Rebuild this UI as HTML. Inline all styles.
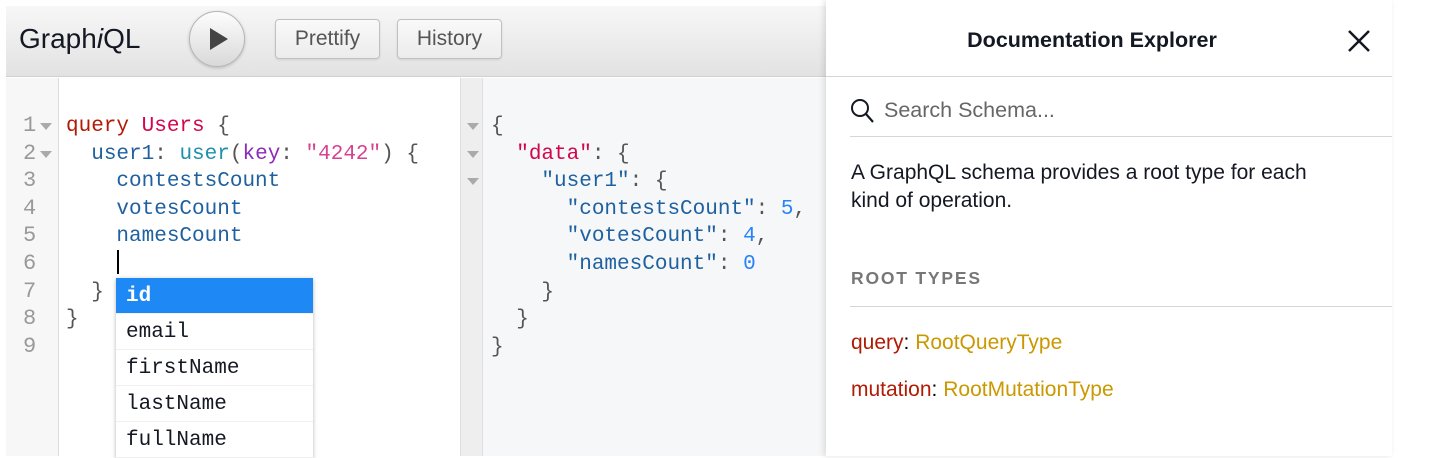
<!DOCTYPE html>
<html><head><meta charset="utf-8"><style>
*{margin:0;padding:0;box-sizing:border-box}
body{width:1440px;height:456px;background:#fff;position:relative;overflow:hidden;font-family:"Liberation Sans",sans-serif}
.abs{position:absolute}
.mono{font-family:"Liberation Mono",monospace;font-size:21px;line-height:27.6px;white-space:pre}
.toolbar{left:6px;top:6px;width:820px;height:71px;background:linear-gradient(#f7f7f7,#e2e2e2);border-bottom:1px solid #d0d0d0}
.btn{position:absolute;top:13px;height:40px;border:1px solid #c0c0c0;border-radius:4px;background:linear-gradient(#f9f9f9,#ececec);font-size:21px;color:#555;text-align:center;line-height:38px;box-shadow:0 1px 2px rgba(0,0,0,.1)}
.kw{color:#b11a04}.def{color:#d2054e}.prop{color:#1f61a0}.q{color:#1c92a9}.at{color:#8b2bb9}.str{color:#d64292}.num{color:#2882f9}.p{color:#555}
.ln{color:#999}
.ar{position:absolute;width:0;height:0;border-left:6px solid transparent;border-right:6px solid transparent;border-top:7px solid #aaa}
.dd{font-family:"Liberation Mono",monospace;font-size:21px}
.dd div{height:36px;line-height:37px;padding-left:10px;border-bottom:1px solid #f0f0f0;color:#141823}
</style></head><body>
<div class="abs toolbar">
 <div class="abs" style="left:13px;top:17px;font-size:28px;color:#141823">Graph<i>i</i>QL</div>
 <div class="abs" style="left:183px;top:5px;width:56px;height:56px;border-radius:50%;border:1px solid #b5b5b5;background:linear-gradient(#fdfdfd,#d9d9d9);box-shadow:0 1px 3px rgba(0,0,0,.2)">
  <svg width="56" height="56" style="position:absolute;left:-1px;top:-1px"><path d="M21 17 L21 39 L39 28 Z" fill="#444"/></svg>
 </div>
 <div class="btn" style="left:269px;width:105px">Prettify</div>
 <div class="btn" style="left:391px;width:105px">History</div>
</div>
<!-- editor -->
<div class="abs" style="left:6px;top:78px;width:53px;height:378px;background:#f7f7f7;border-right:1px solid #ddd"></div>
<div class="abs mono ln" style="left:23px;top:112px;font-size:22px">1
2
3
4
5
6
7
8
9</div>
<div class="ar" style="left:40px;top:123px"></div>
<div class="ar" style="left:40px;top:151px"></div>
<div class="abs mono" style="left:66px;top:113px"><span class="kw">query</span> <span class="def">Users</span> <span class="p">{</span>
  <span class="prop">user1</span><span class="p">:</span> <span class="q">user</span><span class="p">(</span><span class="at">key</span><span class="p">:</span> <span class="str">"4242"</span><span class="p">) {</span>
    <span class="prop">contestsCount</span>
    <span class="prop">votesCount</span>
    <span class="prop">namesCount</span>

  <span class="p">}</span>
<span class="p">}</span></div>
<div class="abs" style="left:117px;top:250px;width:1.5px;height:24px;background:#000"></div>
<div class="abs dd" style="left:116px;top:278px;width:197px;height:180px;background:#fff;box-shadow:0 1px 4px rgba(0,0,0,.3);overflow:hidden"><div style="background:#1e88f5;color:#fff;font-weight:bold">id</div><div>email</div><div>firstName</div><div>lastName</div><div>fullName</div></div>
<!-- results -->
<div class="abs" style="left:460px;top:78px;width:366px;height:378px;background:#f6f7f8"></div>
<div class="abs" style="left:460px;top:78px;width:23px;height:378px;background:#eeeeee;border-left:1px solid #ddd;border-right:1px solid #e0e0e0"></div>
<div class="ar" style="left:467px;top:123px"></div>
<div class="ar" style="left:467px;top:151px"></div>
<div class="ar" style="left:467px;top:178px"></div>
<div class="abs mono" style="left:491px;top:113px"><span class="p">{</span>
  <span class="def">"data"</span><span class="p">: {</span>
    <span class="prop">"user1"</span><span class="p">: {</span>
      <span class="prop">"contestsCount"</span><span class="p">:</span> <span class="num">5</span><span class="p">,</span>
      <span class="prop">"votesCount"</span><span class="p">:</span> <span class="num">4</span><span class="p">,</span>
      <span class="prop">"namesCount"</span><span class="p">:</span> <span class="num">0</span>
    <span class="p">}</span>
  <span class="p">}</span>
<span class="p">}</span></div>
<!-- doc -->
<div class="abs" style="left:826px;top:0;width:566px;height:456px;background:#fff;box-shadow:-2px 0 6px rgba(0,0,0,.12)"></div>
<div class="abs" style="left:826px;top:28px;width:532px;text-align:center;font-size:21.5px;font-weight:bold;color:#141823">Documentation Explorer</div>
<svg class="abs" style="left:1347px;top:29px" width="24" height="24"><path d="M2 2 L22 22 M22 2 L2 22" stroke="#141823" stroke-width="2.5"/></svg>
<div class="abs" style="left:826px;top:76px;width:566px;height:1px;background:#d6d6d6"></div>
<svg class="abs" style="left:850px;top:98px" width="28" height="28"><circle cx="10" cy="10" r="8" stroke="#141823" stroke-width="2" fill="none"/><path d="M16 16 L23 24" stroke="#141823" stroke-width="2.2"/></svg>
<div class="abs" style="left:884px;top:98px;font-size:21.5px;color:#666">Search Schema...</div>
<div class="abs" style="left:850px;top:136px;width:542px;height:1px;background:#d6d6d6"></div>
<div class="abs" style="left:851px;top:159px;font-size:21px;line-height:28px;color:#141823;width:530px">A GraphQL schema provides a root type for each<br>kind of operation.</div>
<div class="abs" style="left:851px;top:268px;font-size:17.5px;font-weight:bold;letter-spacing:1.8px;color:#777">ROOT TYPES</div>
<div class="abs" style="left:850px;top:306px;width:542px;height:1px;background:#d6d6d6"></div>
<div class="abs" style="left:851px;top:331px;font-size:21px"><span style="color:#b11a04">query</span>: <span style="color:#ca9800">RootQueryType</span></div>
<div class="abs" style="left:851px;top:378px;font-size:21px"><span style="color:#b11a04">mutation</span>: <span style="color:#ca9800">RootMutationType</span></div>
</body></html>
